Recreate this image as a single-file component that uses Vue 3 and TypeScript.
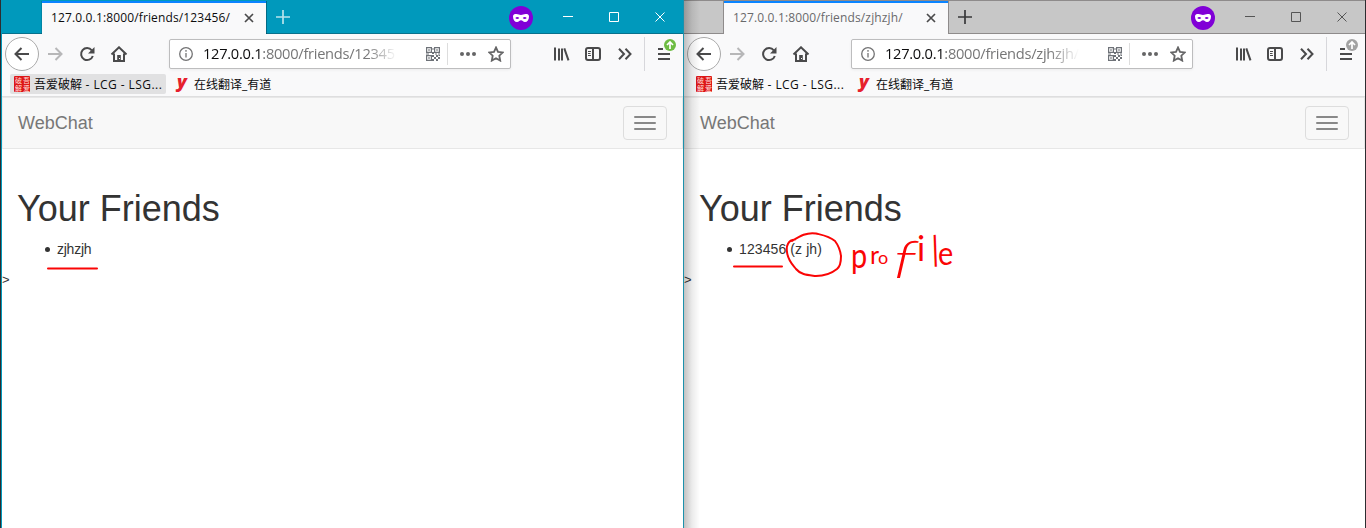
<script setup lang="ts">
interface BrowserWindow {
  id: string
  active: boolean
  title: string
  path: string
  friend: string
}

const windows: BrowserWindow[] = [
  { id: 'first', active: true, title: '127.0.0.1:8000/friends/123456/', path: ':8000/friends/12345', friend: 'zjhzjh' },
  { id: 'second', active: false, title: '127.0.0.1:8000/friends/zjhzjh/', path: ':8000/friends/zjhzjh/', friend: '123456 (z jh)' },
]
</script>

<template>
  <main class="desktop">
    <section v-for="w in windows" :key="w.id" class="window" :class="w.active ? 'active' : 'inactive'">
      <header class="titlebar">
        <div class="tab">
          <span class="tab-title">{{ w.title }}</span>
          <svg class="tab-close" width="10" height="10" viewBox="0 0 10 10"><path d="M1 1l8 8M9 1L1 9" /></svg>
        </div>
        <svg class="new-tab" width="14" height="14" viewBox="0 0 14 14"><path d="M7 0v14M0 7h14" /></svg>
        <svg class="private" width="24" height="24" viewBox="0 0 24 24">
          <circle cx="12" cy="12" r="12" fill="#8000d7" />
          <path fill="#fff" fill-rule="evenodd" d="M4 10.5C4 8.300 5.400 8 7.300 8c2.200 0 3 1 4.700 1s2.500-1 4.700-1C18.600 8 20 8.300 20 10.500 20 14 18.300 16 16 16c-2 0-2.500-1.700-4-1.700S10 16 8 16c-2.300 0-4-2-4-5.500zM6.300 12c.9 1.300 3 1.300 4 0-1-1.400-3.100-1.400-4 0zm7.400 0c1 1.300 3.100 1.300 4 0-.9-1.400-3-1.400-4 0z" />
        </svg>
        <svg class="controls" width="102" height="11" viewBox="0 0 102 11">
          <path d="M0 4.500h10M46.500.5h9v9h-9zM92.500.5l9 9M101.500.5l-9 9" />
        </svg>
      </header>

      <nav class="toolbar">
        <span class="back">
          <svg width="16" height="16" viewBox="0 0 16 16"><path d="M15 8H1.800M7.500 2L1.500 8l6 6" /></svg>
        </span>
        <svg class="forward" width="16" height="16" viewBox="0 0 16 16"><path d="M1 8h13.200M8.500 2l6 6-6 6" /></svg>
        <svg class="reload" width="16" height="16" viewBox="0 0 16 16">
          <path d="M12.800 4.300A6 6 0 1 0 13.800 10" /><path class="solid" d="M15.500 1v6.500H9z" />
        </svg>
        <svg class="home" width="18" height="16" viewBox="0 0 18 16">
          <path d="M1.500 8.500L9 1.300l7.500 7.200M4 7.500V15h10V7.500" /><path class="solid" d="M7.200 9h3.600v6H7.200z" /><path class="knob" d="M9 12h1v1H9z" />
        </svg>
        <div class="address">
          <svg class="info" width="14" height="14" viewBox="0 0 14 14">
            <circle cx="7" cy="7" r="6.300" /><path d="M7 6v4.500M7 3v1.700" />
          </svg>
          <span class="url"><b>127.0.0.1</b>{{ w.path }}</span>
          <svg class="qr" width="14" height="14" viewBox="0 0 14 14">
            <path class="outline" d="M.6.6h4.800v4.800H.6zM8.600.6h4.800v4.800H8.600zM.6 8.600h4.800v4.800H.6z" />
            <path class="bits" d="M2.300 2.300h1.400v1.400H2.300zM10.300 2.300h1.400v1.400h-1.400zM2.300 10.300h1.400v1.400H2.300zM6.500 1h1v2h-1zM6 5h2v2H6zM0 6.500h3v1H0zM9 6.500h2v1H9zM12 6.500h2v1h-2zM6 8h2v2H6zM8 10h2v2H8zM10 8h2v2h-2zM12 10h2v2h-2zM6 12h2v2H6zM10 12h2v2h-2zM12.500 8H14v1h-1.500z" />
          </svg>
          <i class="address-line"></i>
          <svg class="dots" width="16" height="4" viewBox="0 0 16 4"><circle cx="2" cy="2" r="2" /><circle cx="8" cy="2" r="2" /><circle cx="14" cy="2" r="2" /></svg>
          <svg class="star" width="16" height="16" viewBox="0 0 16 16"><path d="M8 1.500l2 4.300 4.800.6-3.500 3.300.9 4.900L8 12.200l-4.200 2.400.9-4.900L1.200 6.400 6 5.800z" /></svg>
        </div>
        <svg class="library" width="16" height="14" viewBox="0 0 16 14"><path d="M1 .5v13M5 1.500v12M8 1.500v12M10.300 1.300l4.200 12" /></svg>
        <svg class="sidebar" width="16" height="14" viewBox="0 0 16 14"><rect x="1" y="1" width="14" height="12" rx="2" /><path d="M8 1v12" /><path class="thin" d="M3 4.500h3M3 6.500h2.500M3 8.500h3" /></svg>
        <svg class="more" width="14" height="12" viewBox="0 0 14 12"><path d="M1 .8L6 6l-5 5.200M7.500.8l5 5.200-5 5.200" /></svg>
        <i class="toolbar-line"></i>
        <span class="menu">
          <svg width="12" height="12" viewBox="0 0 12 12"><path d="M0 1h5M0 6h12M0 11h12" /></svg>
          <svg class="update" width="12" height="12" viewBox="0 0 12 12"><circle cx="6" cy="6" r="6" /><path d="M6 10V3M3 6l3-3 3 3" /></svg>
        </span>
      </nav>

      <div class="bookmarks">
        <span class="bookmark first">
          <span class="seal"><i>破</i><i>吾</i><i>解</i><i>爱</i></span>
          <span class="label">吾爱破解<span> - LCG - LSG...</span></span>
        </span>
        <span class="bookmark">
          <span class="youdao">y</span>
          <span class="label">在线翻译_有道</span>
        </span>
      </div>

      <article class="page">
        <div class="navbar">
          <span class="brand">WebChat</span>
          <button class="toggle" type="button" aria-label="Menu"><i></i><i></i><i></i></button>
        </div>
        <h1>Your Friends</h1>
        <ul><li>{{ w.friend }}</li></ul>
        <p class="stray">&gt;</p>
      </article>
    </section>

    <svg class="markup" width="1366" height="528" viewBox="0 0 1366 528">
      <path d="M48 268.500H97M734 266.500H782" />
      <path d="M795 239.500C788 240 786 246 787 252C788 261 793 265 796 269C801 275 808 275 816 276C824 276 832 273 837 269C841 266 841 260 841 256C840 248 838 245 835 241C829 236 822 235 816 233.500C807 232 800 236 792 241" />
      <text transform="translate(851 268) scale(.85 1)" font-size="34">p</text>
      <text transform="translate(870 264)" font-size="25">r</text>
      <text transform="translate(878 264)" font-size="18">o</text>
      <text class="light" transform="translate(890 278) skewX(-13) scale(1.2 1)" font-size="52">f</text>
      <text transform="translate(917 261)" font-size="34">i</text>
      <text class="light" transform="translate(931 267) rotate(-2)" font-size="44">l</text>
      <text transform="translate(938 265) scale(.9 1)" font-size="32">e</text>
    </svg>
  </main>
</template>

<style>
body { margin: 0; overflow: hidden; }
</style>

<style scoped>
* { box-sizing: border-box; }
svg { display: block; flex: none; fill: none; stroke: #4a4a4b; stroke-width: 2; }
i { font-style: normal; }
.desktop { position: relative; display: flex; width: 1366px; height: 528px; padding-left: 1px; background: #2d2d30; overflow: hidden; font-family: "Open Sans", "Noto Sans CJK SC", sans-serif; }
.window { position: relative; height: 528px; background: #fff; flex: none; }
.active { width: 683px; border-left: 1px solid #0099bc; border-right: 1px solid #1c91ac; }
.inactive { width: 681px; }
.inactive::before { content: ""; position: absolute; z-index: 2; inset: 0 auto 0 0; width: 16px; background: linear-gradient(90deg, rgba(0,0,0,.24), rgba(0,0,0,.08) 50%, transparent); }
.titlebar { display: flex; align-items: flex-start; height: 34px; padding-left: 40px; background: #0099bc; border-bottom: 1px solid #08718c; }
.inactive .titlebar { background: #c7c7c7; border-bottom-color: #8e8b8b; box-shadow: inset 0 1px #8e8b8b; }
.tab { display: flex; align-items: center; width: 224px; height: 33px; margin: 1px 0 -1px; padding-left: 9px; background: #f9f9fa; border-top: 2px solid #0a84ff; box-shadow: 1px 0 rgba(0,60,80,.5), -1px 0 rgba(0,60,80,.2); flex: none; }
.inactive .tab { box-shadow: 1px 0 #8e8b8b, -1px 0 #8e8b8b; }
.tab-title { width: 193px; margin-top: -1px; font-size: 12px; line-height: 18px; letter-spacing: .14px; color: #0c0c0d; white-space: nowrap; }
.inactive .tab-title { color: #69696b; }
.tab-close { margin-top: -1px; stroke: #4a4a4b; stroke-width: 1.7; }
.new-tab { margin: 10px 0 0 10px; stroke: #b8e3ec; stroke-width: 1.7; }
.inactive .new-tab { stroke: #38383a; }
.private { margin: 6px 0 0 219px; stroke: none; }
.controls { margin: 12px 0 0 30px; stroke: #fff; stroke-width: 1; }
.inactive .controls { stroke: #555; }
.toolbar { display: flex; align-items: center; height: 40px; padding-left: 3px; background: #f9f9fa; }
.back { display: grid; place-items: center; width: 34px; height: 34px; border: 1px solid #aaa; border-radius: 50%; background: #fff; flex: none; }
.forward { margin-left: 8px; stroke: #b7b7b8; }
.reload { margin-left: 16px; }
.home { margin-left: 15px; }
.solid { fill: #4a4a4b; stroke: none; }
.knob { fill: #fff; stroke: none; }
.address { display: flex; align-items: center; width: 342px; height: 30px; margin-left: 41px; padding-left: 9px; background: #fff; border: 1px solid #bdbdbe; border-radius: 2px; box-shadow: 0 1px 3px rgba(0,0,0,.06); flex: none; }
.info { stroke: #737374; stroke-width: 1.3; }
.url { width: 194px; margin: -2px 0 0 10px; color: #767677; font-size: 14.670px; line-height: 24px; letter-spacing: -.28px; white-space: nowrap; flex: none; mask-image: linear-gradient(90deg, #000 164px, transparent 194px); }
.url b { font-weight: 400; color: #0c0c0d; }
.qr { margin-left: 29px; }
.qr .outline { stroke: #6e7278; stroke-width: 1.200; }
.qr .bits { fill: #6e7278; stroke: none; }
.address-line { width: 1px; height: 22px; margin: 0 12px 0 7px; background: #ddd; }
.dots { fill: #656566; stroke: none; }
.star { margin-left: 12px; stroke: #656566; stroke-width: 1.800; }
.library { margin-left: 43px; }
.sidebar { margin-left: 15px; }
.sidebar .thin { stroke-width: 1; }
.more { margin-left: 17px; }
.toolbar-line { width: 1px; height: 34px; margin: 0 13px 0 12px; background: #d7d7db; }
.menu { position: relative; }
.update { position: absolute; left: 6px; top: -9px; stroke: #fff; stroke-width: 1.700; overflow: visible; }
.update circle { fill: #6ebc43; stroke: none; }
.inactive .update circle { fill: #a2a2a2; }
.bookmarks { display: flex; align-items: flex-start; height: 22px; padding-left: 8px; background: #f9f9fa; color: #0c0c0d; font-size: 12px; line-height: 20px; white-space: nowrap; }
.bookmark { display: flex; align-items: center; height: 20px; }
.bookmark.first { width: 156px; padding-left: 4px; margin-right: 10px; border-radius: 2px; }
.active .bookmark.first { background: #e1e1e2; }
.label { padding-top: 2px; }
.label span { letter-spacing: .43px; }
.seal { display: grid; grid-template-columns: 7px 7px; grid-template-rows: 7px 7px; gap: 1px; width: 16px; height: 16px; padding: 1px 0 0 1px; margin-right: 4px; background: #dd1717; color: #ffdcd8; font-size: 7px; line-height: 7px; border-radius: 1px; overflow: hidden; }
.seal i { overflow: hidden; }
.youdao { width: 18px; height: 20px; padding-left: 1px; color: #e6202c; font: italic 800 18px/14px "Open Sans", sans-serif; }
.page { height: 432px; border-top: 1px solid #dededf; font-family: "Liberation Sans", sans-serif; color: #333; }
.navbar { display: flex; align-items: center; justify-content: space-between; height: 52px; padding: 0 16px 0 15px; background: #f8f8f8; border: 1px solid #e7e7e7; border-left-color: #eee; }
.brand { font-size: 18px; line-height: 20px; color: #777; }
.toggle { display: grid; align-content: center; justify-content: center; gap: 4px; width: 44px; height: 34px; margin-right: -1px; padding: 0; border: 1px solid #ddd; border-radius: 4px; background: transparent; }
.toggle i { width: 22px; height: 2px; border-radius: 1px; background: #888; }
h1 { margin: 40px 0 10px 15px; font-size: 36px; font-weight: 500; line-height: 40px; }
ul { margin: 0 0 11px 15px; padding-left: 28px; font-size: 14px; line-height: 20px; list-style: none; }
li { display: flex; align-items: center; }
li::before { content: ""; width: 5px; height: 5px; margin-right: 7px; border-radius: 50%; background: #333; }
.active li { letter-spacing: -.25px; }
.inactive li { letter-spacing: .1px; }
.stray { margin: 0; font-size: 13px; line-height: 20px; }
.markup { position: absolute; inset: 0; z-index: 3; pointer-events: none; stroke: #fa0505; stroke-linecap: round; stroke-linejoin: round; }
.markup text { fill: #fa0505; stroke: none; font-family: Lato, sans-serif; }
.markup .light { font-weight: 300; }
</style>
